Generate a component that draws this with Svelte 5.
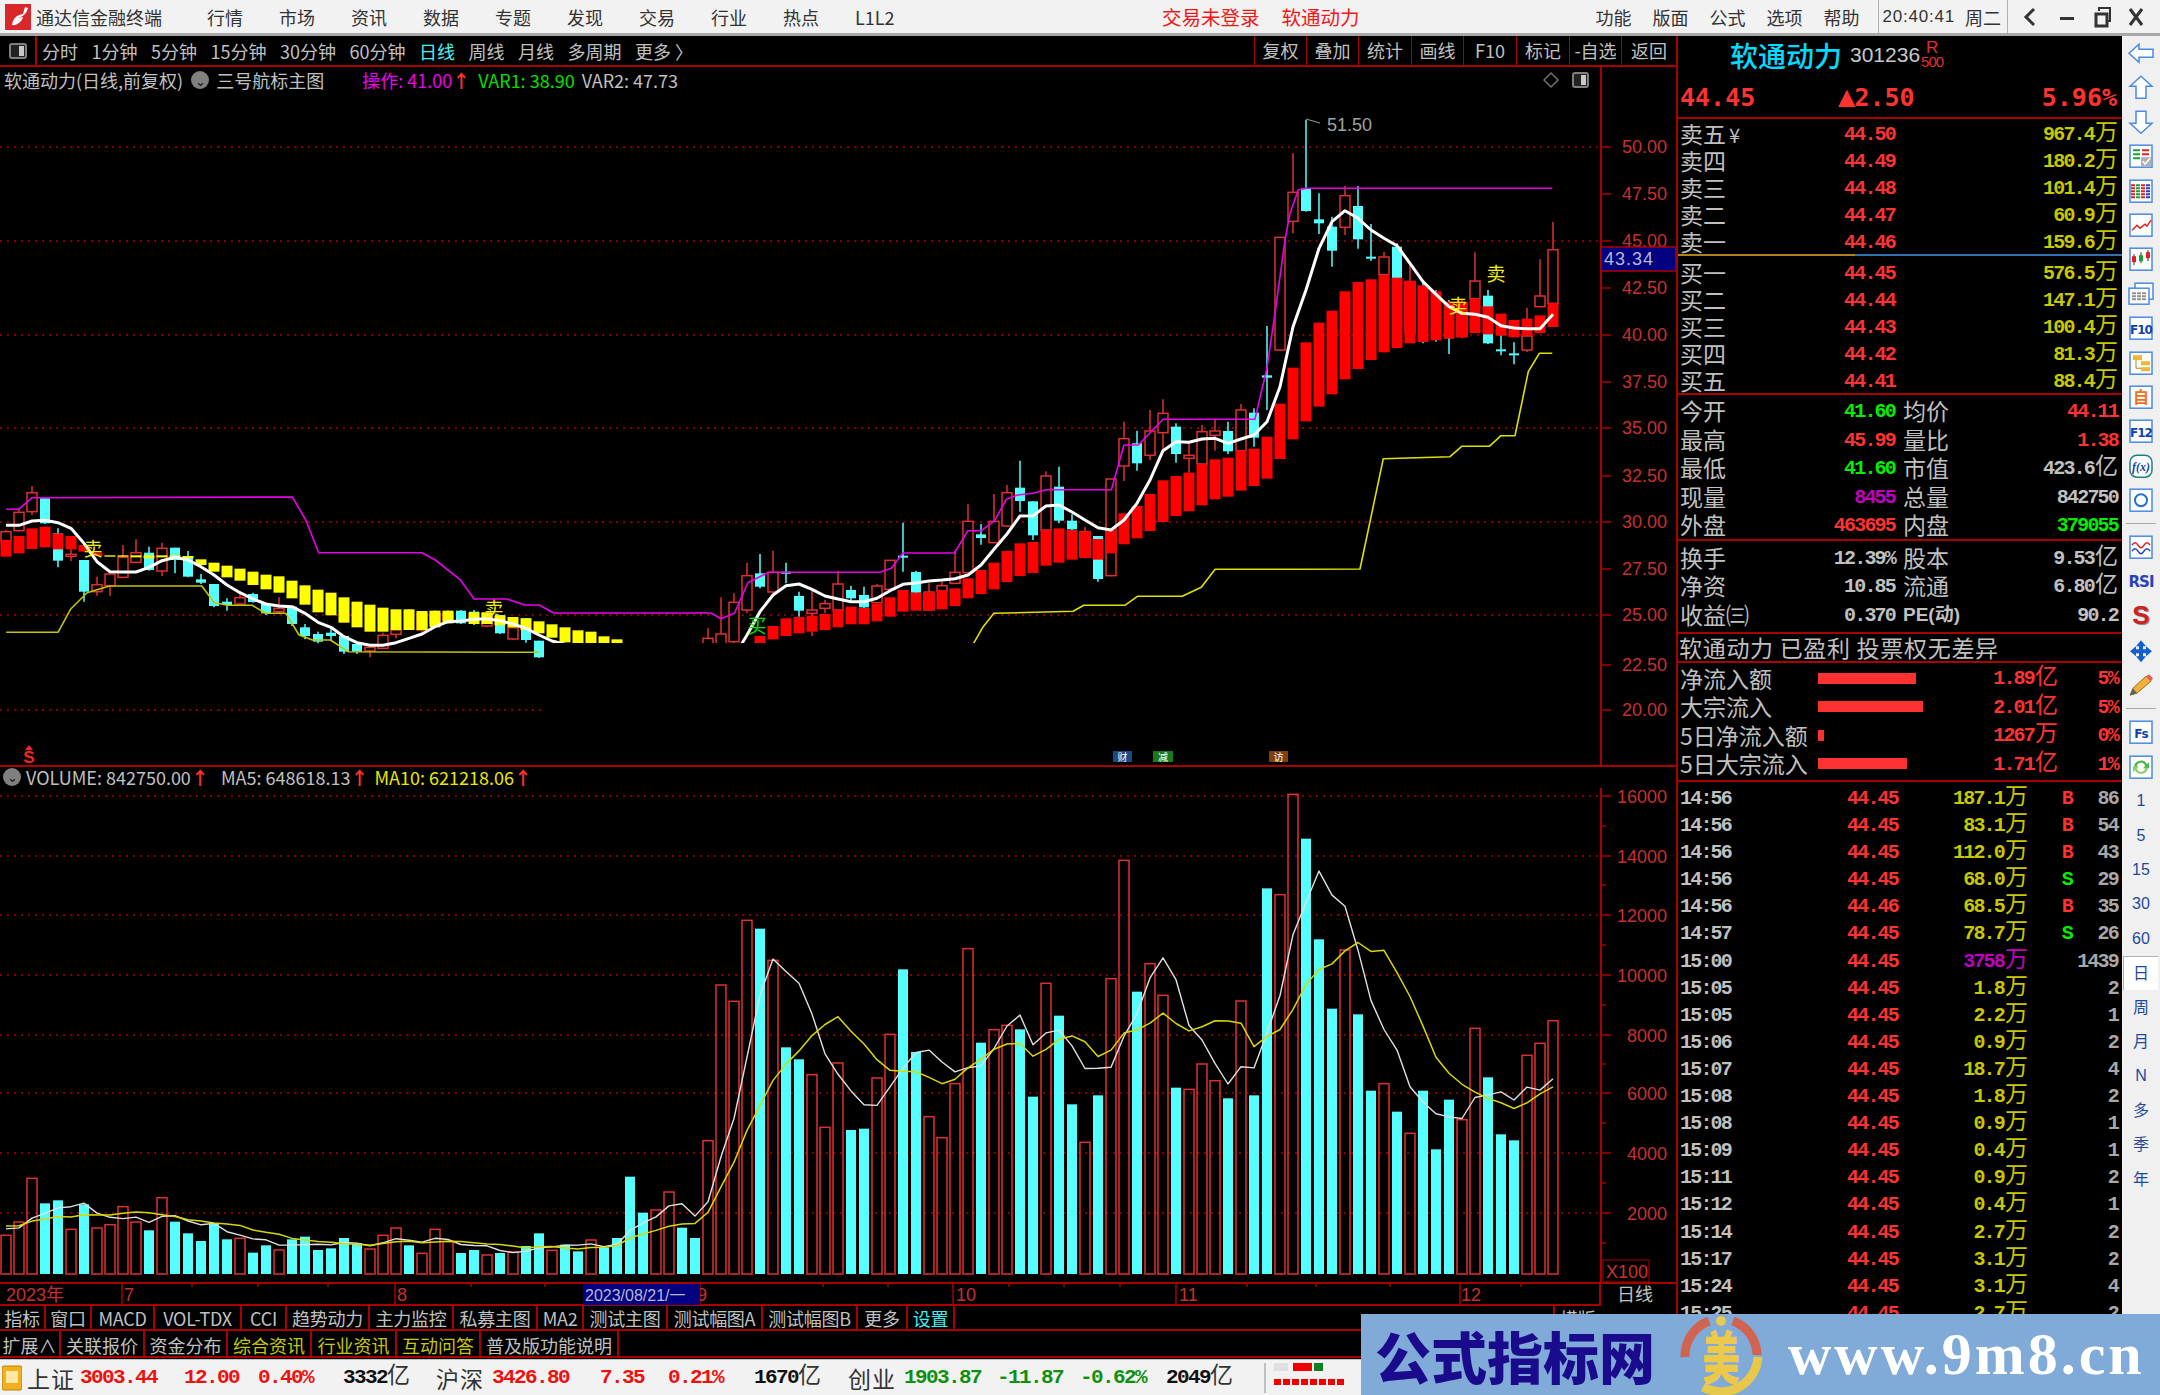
<script>
  const menus = ['行情', '市场', '资讯', '数据', '专题', '发现', '交易', '行业', '热点', 'L1L2'];
  const sysMenus = ['功能', '版面', '公式', '选项', '帮助'];
  const periods = ['分时', '1分钟', '5分钟', '15分钟', '30分钟', '60分钟', '日线', '周线', '月线', '多周期', '更多 〉'];
  const tools = ['复权', '叠加', '统计', '画线', 'F10', '标记', '-自选', '返回'];
  const tabs1 = ['指标', '窗口', 'MACD', 'VOL-TDX', 'CCI', '趋势动力', '主力监控', '私募主图', 'MA2', '测试主图', '测试幅图A', '测试幅图B', '更多', '设置'];
  const tabs2 = ['扩展∧', '关联报价', '资金分布', '综合资讯', '行业资讯', '互动问答', '普及版功能说明'];

  const sells = [
    ['卖五', '44.50', '967.4'], ['卖四', '44.49', '180.2'], ['卖三', '44.48', '101.4'],
    ['卖二', '44.47', '60.9'], ['卖一', '44.46', '159.6']
  ];
  const buys = [
    ['买一', '44.45', '576.5'], ['买二', '44.44', '147.1'], ['买三', '44.43', '100.4'],
    ['买四', '44.42', '81.3'], ['买五', '44.41', '88.4']
  ];
  const flows = [
    ['净流入额', 98, '1.89', '亿', '5%'],
    ['大宗流入', 105, '2.01', '亿', '5%'],
    ['5日净流入额', 6, '1267', '万', '0%'],
    ['5日大宗流入', 89, '1.71', '亿', '1%']
  ];
  const ticks = [
    ['14:56', '44.45', '187.1', 'B', '86'], ['14:56', '44.45', '83.1', 'B', '54'],
    ['14:56', '44.45', '112.0', 'B', '43'], ['14:56', '44.45', '68.0', 'S', '29'],
    ['14:56', '44.46', '68.5', 'B', '35'], ['14:57', '44.45', '78.7', 'S', '26'],
    ['15:00', '44.45', '3758', '', '1439'], ['15:05', '44.45', '1.8', '', '2'],
    ['15:05', '44.45', '2.2', '', '1'], ['15:06', '44.45', '0.9', '', '2'],
    ['15:07', '44.45', '18.7', '', '4'], ['15:08', '44.45', '1.8', '', '2'],
    ['15:08', '44.45', '0.9', '', '1'], ['15:09', '44.45', '0.4', '', '1'],
    ['15:11', '44.45', '0.9', '', '2'], ['15:12', '44.45', '0.4', '', '1'],
    ['15:14', '44.45', '2.7', '', '2'], ['15:17', '44.45', '3.1', '', '2'],
    ['15:24', '44.45', '3.1', '', '4'], ['15:25', '44.45', '2.7', '', '2']
  ];

  // candles sit 13px apart, read off the crops (y values are crop units: base + z / 3)
  const cx = (i) => 6 + 13 * i;
  const shift = (base, rows) => rows.map((r) => r.map((z) => base + z / 3));
  const pts = (sx, x0, y0, rows) =>
    rows.map(([x, y]) => `${(x0 + x / sx).toFixed(1)},${(y0 + y / 3).toFixed(1)}`).join(' ');

  const kinds =
    'rrrccrcrrrrcrccccc' + 'rc' +
    'crccccccrrrcrrrccrcr' +
    'ccrccrccccrrccrrrrcr' +
    'ccrrrccrrccrrrrcrrcc' +
    'rccrcrrcrrcrrrcrccrr' +
    'cccrccrcrcccrrcccrrr';

  const candles = [
    ...shift(450, [
      [245,272,240,275],[187,242,175,245],[128,185,108,195],[145,220,145,222],[250,332,235,352],
      [313,318,298,333],[330,425,330,455],[404,425,380,437],[372,407,370,437],[322,382,285,385],
      [308,337,268,340],[308,360,290,362],[295,363,278,378],[293,330,293,370],[318,380,303,382],
      [388,398,372,402],[402,468,402,472],[455,465,445,482],[443,462,430,465],[432,456,428,458],
      [462,490,462,495],[475,485,442,490],[470,522,470,528],[532,558,522,568],[552,575,545,580],
      [548,558,536,572],[558,605,558,612],[582,605,580,612],[592,603,590,622],[556,595,548,597],
      [540,553,508,565],[490,535,478,540],[490,540,484,545],[490,520,480,530],[490,510,480,520],
      [482,520,480,522],[485,520,480,525],[490,528,487,532],[495,550,495,552],[533,567,533,569],
      [505,570,505,578],[572,622,572,624]
    ]),
    ...Array(12).fill(null),
    ...shift(380, [
      [775,800,745,820],[762,800,652,820],[667,785,640,790],[587,690,548,700],[580,620,522,625],
      [577,636,512,640],[575,578,548,610],[648,692,635,710],[690,700,632,768],[671,685,660,700],
      [612,690,572,692],[630,655,617,662],[645,682,620,684],[618,668,612,670],[541,628,541,630],
      [527,533,428,575],[576,638,572,640],[636,690,610,692],[617,634,605,640],[577,610,512,612],
      [424,578,373,580],[463,474,432,494],[424,488,342,490],[338,438,315,440],[323,363,242,395],
      [364,466,364,480],[288,450,274,452],[320,422,260,430],[422,448,403,450],[455,530,440,535],
      [468,597,468,605],[297,587,297,589],[176,258,125,303],[190,250,152,272],[153,226,90,240],
      [100,158,58,210],[140,222,130,248],[226,235,190,278],[155,252,135,254],[153,166,120,212],
      [153,214,125,222],[90,212,72,214]
    ]),
    ...shift(100, [
      [938,1013,925,1040],[826,833,678,930],[412,750,412,752],[277,364,160,400],[265,333,60,335],
      [358,370,280,402],[380,452,350,500],[287,382,258,405],[318,418,258,446],[470,476,372,483],
      [471,524,456,526],[440,535,430,537],[545,700,490,720],[560,720,548,730],[580,720,570,725],
      [610,715,600,762],[610,710,600,715],[543,596,457,598],[587,730,570,732],[748,752,705,766],
      [760,765,727,793],[708,750,623,756],[588,620,478,622],[449,610,366,612]
    ])
  ];

  const band = [
    ...shift(450, [
      [270,320],[258,310],[235,297],[230,292],[250,298],[258,298],[285,305],[308,318],[316,320],[316,320],
      [316,322],[316,325],[316,322],[316,324],[318,325],[328,345],[338,365],[347,382],[356,392],[365,405],
      [374,418],[379,428],[392,445],[406,464],[419,487],[428,496],[442,518],[455,532],[464,545],[473,545],
      [478,540],[478,540],[483,540],[482,532],[482,520],[0,0],[487,522],[487,522],[497,526],[501,532],
      [505,540],[514,550],[523,563],[532,577],[541,580],[545,580],[559,580],[568,580]
    ]),
    ...Array(10).fill([0, 0]),
    ...shift(380, [
      [768,790],[738,778],[715,768],[711,760],[707,755],[702,750],[689,742],[680,733],[684,733],[671,724],
      [652,710],[630,695],[638,692],[638,692],[630,688],[625,678],[595,655],[570,642],[548,628],[513,606],
      [490,588],[486,579],[450,557],[445,548],[450,539],[454,534],[477,539],[450,520],[400,493],[378,475],
      [342,453],[301,426],[288,408],[278,394],[252,376],[238,358],[233,350],[211,332]
    ]),
    ...shift(100, [
      [1046,1158],[1010,1136],[911,1077],[803,1018],[727,964],[668,920],[632,883],[574,838],[546,807],[538,780],
      [525,757],[533,744],[542,730],[556,726],[574,721],[605,716],[605,712],[596,699],[619,703],[641,707],
      [660,712],[656,707],[646,699],[610,681]
    ])
  ];

  const whiteY = [
    ...[226,226,213,211,218,235,280,335,365,366,366,352,332,322,330,350,375,405,428,447,462,468,470,490,517,
      532,560,578,586,586,578,565,552,530,515,513,508,506,512,522,535,555,573,583].map((z) => [0, 450 + z / 3]),
    ...Array(12).fill(null),
    ...[830,765,695,645,617,612,628,648,657,665,665,655,632,613,609,603,600,596,585,555,508,462,408,407,378,375,
      396,420,443,450,420,370,300,212,185,187,177,175,190,177].map((z) => [0, 380 + z / 3]),
    ...[1005,965,860,680,570,445,365,332,355,390,415,437,490,545,583,620,640,643,652,677,684,686,686,643].map((z) => [0, 100 + z / 3])
  ];
  const whiteLine = whiteY
    .map((p, i) => (p ? `${cx(i)},${p[1].toFixed(1)}` : ''))
    .filter(Boolean)
    .join(' ');

  const magentaLine = [
    pts(2.24, 0, 450, [[14,178],[42,178],[72,143],[655,141],[685,210],[714,308],[945,308],[975,330],[1030,388],[1062,447],[1135,447],[1175,465],[1208,465],[1240,489],[1568,489]]),
    pts(2.613, 700, 380, [[0,698],[30,700],[55,716],[90,700],[125,608],[180,577],[470,577],[500,565],[530,519],[665,519],[700,452],[735,452],[770,422],[800,358],[830,345],[870,340],[905,329],[1075,329],[1108,195],[1145,195],[1210,118],[1450,118]]),
    pts(3, 1200, 100, [[200,808],[225,640],[255,420],[270,340],[295,270],[318,265],[1057,265]])
  ].join(' ');

  const oliveLine = [
    pts(2.24, 0, 450, [[14,547],[130,547],[158,478],[195,428],[245,408],[452,408],[480,458],[510,466],[565,466],[595,490],[640,490],[670,555],[700,570],[740,570],[780,605],[1208,607]]),
  ].join(' ');
  const oliveLine2 = [
    pts(2.613, 700, 380, [[690,860],[715,790],[740,740],[768,700],[975,694],[1003,676],[1110,676],[1143,649],[1260,649],[1310,622],[1346,568],[1568,568]]),
    pts(3, 1200, 100, [[480,1407],[550,1076],[750,1070],[785,1039],[868,1039],[903,1007],[945,1007],[985,815],[1018,760],[1057,760]])
  ].join(' ');

  const priceAxis = [
    ['50.00', 146], ['47.50', 193], ['45.00', 240], ['42.50', 287], ['40.00', 334], ['37.50', 381], ['35.00', 427],
    ['32.50', 475], ['30.00', 521], ['27.50', 568], ['25.00', 614], ['22.50', 664], ['20.00', 709]
  ];
  const priceDots = [146, 240, 334, 427, 521, 614, 709];

  // volume bar tops, y = 770 + z / 3
  const volTops = [
    1396,1356,1225,1300,1291,1378,1303,1374,1364,1310,1356,1381,1283,1355,1390,1413,1360,1408,1405,1448,
    1426,1440,1408,1400,1440,1435,1404,1420,1437,1396,1374,1426,1450,1378,1415,1449,1440,1455,1449,1446,
    1428,1390,1441,1424,1444,1410,1432,1404,1220,1328,1320,1266,1373,1404,1112,645,694,451,476,571,
    832,868,914,1072,879,1080,1076,924,793,598,846,1040,1103,941,536,818,779,766,778,980,
    640,737,1003,1117,976,626,271,665,581,676,953,958,882,932,985,693,976,355,374,73,
    206,508,716,540,733,962,941,1025,1090,962,1138,989,1049,775,922,1093,1111,856,820,752
  ];
  const volY = (z) => 770 + z / 3;
  const volBase = 1274;
  const volumes = volTops.map((z, i) => ({ x: cx(i), y: volY(z), kind: kinds[i], h: 1510 - z }));

  function movingAvg(n, seed) {
    const hs = [...Array(n - 1).fill(seed), ...volumes.map((v) => v.h)];
    return volumes
      .map((v, i) => {
        const part = hs.slice(i, i + n);
        const avg = part.reduce((a, b) => a + b, 0) / n;
        return `${v.x},${volY(1510 - avg).toFixed(1)}`;
      })
      .join(' ');
  }
  const ma5 = movingAvg(5, 138);
  const ma10 = movingAvg(10, 145);

  const volAxis = [
    ['16000', 796], ['14000', 856], ['12000', 915], ['10000', 975], ['8000', 1035], ['6000', 1093], ['4000', 1153], ['2000', 1213]
  ];
  const volMinor = [826, 885, 945, 1005, 1064, 1123, 1183, 1243];

  const months = [['2023年', 6, 0], ['7', 124, 122], ['8', 397, 395], ['9', 697, 700], ['10', 956, 953], ['11', 1179, 1176], ['12', 1461, 1460]];
  const dateTicks = [192, 258, 328, 471, 545, 823, 888, 1009, 1064, 1120, 1247, 1316, 1390, 1521];
  const textIcons = ['1', '5', '15', '30', '60', '日', '周', '月', 'N', '多', '季', '年'];
</script>

<div class="app">
  <header class="titlebar">
    <svg class="logo" viewBox="0 0 26 26">
      <rect width="26" height="26" fill="#d8282c" />
      <path d="M7 21 C8 14 12 11 18 10 L20 3 L23 4 C21 12 15 13 13 14 L18 13 C17 18 11 22 7 21Z" fill="#fff" />
    </svg>
    <span class="appname">通达信金融终端</span>
    <nav class="menus">
      {#each menus as m}<span>{m}</span>{/each}
    </nav>
    <span class="notice">交易未登录</span>
    <span class="notice stock-notice">软通动力</span>
    <nav class="sysmenus">
      {#each sysMenus as m}<span>{m}</span>{/each}
    </nav>
    <div class="clock">
      <span class="time">20:40:41</span>
      <span>周二</span>
    </div>
    <div class="winbtns">
      <svg viewBox="0 0 130 24">
        <path d="M20 4 L12 12 L20 20" fill="none" stroke="#333" stroke-width="3" />
        <rect x="46" y="12" width="14" height="3" fill="#333" />
        <rect x="82" y="9" width="11" height="12" fill="none" stroke="#333" stroke-width="3" />
        <path d="M85 6 V3 H96 V16 H93" fill="none" stroke="#333" stroke-width="2" />
        <path d="M116 4 L128 20 M128 4 L116 20" stroke="#333" stroke-width="3" />
      </svg>
    </div>
  </header>

  <div class="workspace">
    <section class="left">
      <div class="toolbar">
        <div class="panel-toggle">
          <svg viewBox="0 0 20 20" width="20" height="20">
            <rect x="2" y="3" width="16" height="14" rx="2" fill="#222" stroke="#808080" stroke-width="2" />
            <rect x="11" y="5" width="5" height="10" fill="#c8c8c8" />
          </svg>
        </div>
        <div class="periods">
          {#each periods as p}<span class:on={p === '日线'}>{p}</span>{/each}
        </div>
        <div class="tools">
          {#each tools as t}<span>{t}</span>{/each}
        </div>
      </div>

      <div class="legend">
        <span class="gray">软通动力(日线,前复权)</span>
        <span class="dot">⌄</span>
        <span class="gray">三号航标主图</span>
        <span class="magenta op">操作: 41.00<i>↑</i></span>
        <span class="green var1">VAR1: 38.90</span>
        <span class="gray var2">VAR2: 47.73</span>
        <span class="legend-icons">
          <svg viewBox="0 0 50 20" width="50" height="20">
            <path d="M8 3 L15 10 L8 17 L1 10Z" fill="none" stroke="#707070" stroke-width="1.5" />
            <rect x="30" y="3" width="15" height="14" rx="2" fill="#222" stroke="#808080" stroke-width="2" />
            <rect x="38" y="5" width="5" height="10" fill="#c8c8c8" />
          </svg>
        </span>
      </div>

      <svg class="pane main-pane" viewBox="0 95 1676 670">
        {#each priceDots as y}
          <line x1="0" x2="1600" y1={y + 1} y2={y + 1} class="dots" />
        {/each}

        {#each candles as c, i}
          {#if c}
            <g class={kinds[i] === 'r' ? 'up' : 'down'}>
              <line x1={cx(i)} x2={cx(i)} y1={c[2]} y2={c[3]} />
              <rect x={cx(i) - 5} y={c[0]} width="10" height={Math.max(c[1] - c[0], 2)} />
            </g>
          {/if}
        {/each}

        {#each band as b, i}
          {#if b[1] > b[0]}
            <rect x={cx(i) - 5.5} y={b[0]} width="11" height={b[1] - b[0]} fill={i < 8 || i > 47 ? '#ff0000' : '#ffff00'} />
          {/if}
        {/each}

        <polyline points={magentaLine} class="line-magenta" />
        <polyline points={oliveLine} class="line-olive" />
        <polyline points={oliveLine2} class="line-yellow" />
        <polyline points={whiteLine} class="line-white" />

        <!-- that part of the lower chart is blacked out in the screenshot -->
        <rect x="545" y="643" width="1055" height="122" fill="#000" />

        <text x="93" y="556" class="mark sell">卖</text>
        <text x="494" y="616" class="mark sell">卖</text>
        <text x="1458" y="313" class="mark sell">卖</text>
        <text x="1496" y="281" class="mark sell">卖</text>
        <text x="757" y="633" class="mark buy">买</text>

        <path d="M1306 119 L1320 123" stroke="#a0a0a0" fill="none" />
        <text x="1327" y="131" class="peak">51.50</text>

        <path d="M29 745 L33 750 H25Z" fill="#ff2020" />
        <text x="29" y="763" class="dollar">S</text>
        <g class="events">
          <rect x="1113" y="751" width="19" height="11" fill="#1a4a80" />
          <text x="1122.5" y="761">财</text>
          <rect x="1153" y="751" width="20" height="11" fill="#1a7a1a" />
          <text x="1163" y="761">减</text>
          <rect x="1269" y="751" width="19" height="11" fill="#804010" />
          <text x="1278.5" y="761">访</text>
        </g>

        <line x1="1601" x2="1601" y1="95" y2="765" class="axis-line" />
        {#each priceAxis as [label, y]}
          <line x1="1601" x2="1611" y1={y + 1} y2={y + 1} class="axis-tick" />
          <text x="1622" y={y + 7} class="axis-text">{label}</text>
        {/each}
        <rect x="1601" y="247" width="75" height="24" fill="#000080" stroke="#b00000" stroke-width="1.5" />
        <text x="1604" y="265" class="last-price">43.34</text>
      </svg>

      <div class="legend vol-legend">
        <span class="dot">⌄</span>
        <span class="gray">VOLUME: 842750.00<i>↑</i></span>
        <span class="gray ma5">MA5: 648618.13<i>↑</i></span>
        <span class="yellow ma10">MA10: 621218.06<i>↑</i></span>
      </div>

      <svg class="pane vol-pane" viewBox="0 788 1676 494">
        {#each volAxis as [, y]}
          <line x1="0" x2="1600" y1={y} y2={y} class="dots" />
        {/each}

        {#each volumes as v}
          <rect
            x={v.x - 5}
            y={v.y}
            width="10"
            height={volBase - v.y}
            class={v.kind === 'r' ? 'vol-up' : 'vol-down'}
          />
        {/each}

        <polyline points={ma5} class="ma-white" />
        <polyline points={ma10} class="ma-yellow" />

        <line x1="1601" x2="1601" y1="788" y2="1282" class="axis-line" />
        {#each volAxis as [label, y]}
          <line x1="1601" x2="1611" y1={y} y2={y} class="axis-tick" />
          <text x={label.length > 4 ? 1617 : 1627} y={y + 7} class="axis-text">{label}</text>
        {/each}
        {#each volMinor as y}
          <line x1="1601" x2="1606" y1={y} y2={y} class="axis-tick" />
        {/each}
        <rect x="1603" y="1260" width="46" height="22" fill="none" stroke="#a80000" />
        <text x="1606" y="1278" class="axis-text">X100</text>
      </svg>

      <svg class="pane date-row" viewBox="0 1282 1676 24">
        <line x1="0" x2="1676" y1="1283" y2="1283" class="axis-line" />
        <line x1="0" x2="1600" y1="1305" y2="1305" class="axis-line" />
        {#each dateTicks as x}
          <line x1={x} x2={x} y1="1283" y2="1287" class="axis-tick" />
        {/each}
        {#each months as [label, tx, lx]}
          {#if lx}<line x1={lx} x2={lx} y1="1283" y2="1306" class="axis-tick" />{/if}
          <text x={tx} y="1301" class="axis-text">{label}</text>
        {/each}
        <rect x="583" y="1284" width="117" height="21" fill="#000080" />
        <text x="585" y="1301" class="cursor-date">2023/08/21/一</text>
        <line x1="1600" x2="1600" y1="1283" y2="1306" class="axis-line" />
        <text x="1635" y="1301" class="period-name">日线</text>
      </svg>

      <div class="tabs tabs-a">
        {#each tabs1 as t}<span class:cyan={t === '设置'}>{t}</span>{/each}
        <span class="blank"></span>
        <span class="tail">横版</span>
        <span class="tail">+</span>
      </div>
      <div class="tabs tabs-b">
        {#each tabs2 as t}
          <span class:olive={t === '综合资讯' || t === '行业资讯' || t === '互动问答'}>{t}</span>
        {/each}
      </div>
    </section>

    <aside class="quote">
      <div class="q-head">
        <div class="q-name">
          <span class="name">软通动力</span>
          <span class="code">301236</span>
          <span class="tag"><b>R</b><small>500</small></span>
        </div>
        <div class="q-price">
          <span>44.45</span>
          <span><i>▲</i>2.50</span>
          <span>5.96%</span>
        </div>
      </div>

      <div class="book sells">
        {#each sells as [label, price, vol], i}
          <div class="row">
            <span class="cjk">{label}{#if i === 0}<em>¥</em>{/if}</span>
            <span class="num red">{price}</span>
            <span class="num olive-t">{vol}<i>万</i></span>
          </div>
        {/each}
      </div>
      <div class="book buys">
        {#each buys as [label, price, vol]}
          <div class="row">
            <span class="cjk">{label}</span>
            <span class="num red">{price}</span>
            <span class="num olive-t">{vol}<i>万</i></span>
          </div>
        {/each}
      </div>

      <div class="stats stats-a">
        <span class="cjk">今开</span><span class="num green-t">41.60</span><span class="cjk">均价</span><span class="num red">44.11</span>
        <span class="cjk">最高</span><span class="num red">45.99</span><span class="cjk">量比</span><span class="num red">1.38</span>
        <span class="cjk">最低</span><span class="num green-t">41.60</span><span class="cjk">市值</span><span class="num">423.6<i>亿</i></span>
        <span class="cjk">现量</span><span class="num purple">8455</span><span class="cjk">总量</span><span class="num">842750</span>
        <span class="cjk">外盘</span><span class="num red">463695</span><span class="cjk">内盘</span><span class="num green-t">379055</span>
      </div>
      <div class="stats stats-b">
        <span class="cjk">换手</span><span class="num">12.39%</span><span class="cjk">股本</span><span class="num">9.53<i>亿</i></span>
        <span class="cjk">净资</span><span class="num">10.85</span><span class="cjk">流通</span><span class="num">6.80<i>亿</i></span>
        <span class="cjk">收益㈢</span><span class="num">0.370</span><span class="pe">PE(动)</span><span class="num">90.2</span>
      </div>

      <div class="q-title">软通动力 已盈利 投票权无差异</div>

      <div class="flows">
        {#each flows as [label, w, val, unit, pct]}
          <div class="flow">
            <span class="cjk">{label}</span>
            <span class="bar-wrap"><span class="bar" style="width:{w}px"></span></span>
            <span class="num red">{val}<i>{unit}</i></span>
            <span class="num red">{pct}</span>
          </div>
        {/each}
      </div>

      <div class="ticks">
        {#each ticks as [time, price, vol, side, count]}
          <div class="tick">
            <span class="num time-t">{time}</span>
            <span class="num red">{price}</span>
            <span class="num" class:purple={vol === '3758'} class:olive-t={vol !== '3758'}>{vol}<i>万</i></span>
            <span class="num" class:red={side === 'B'} class:green-t={side === 'S'}>{side}</span>
            <span class="num count">{count}</span>
          </div>
        {/each}
      </div>
    </aside>

    <aside class="strip">
      <svg viewBox="0 0 28 24"><polygon points="2,12 12,3 12,8 26,8 26,16 12,16 12,21" class="arrow" /></svg>
      <svg viewBox="0 0 28 24"><polygon points="14,1 25,11 19,11 19,23 9,23 9,11 3,11" class="arrow" /></svg>
      <svg viewBox="0 0 28 24"><polygon points="14,23 25,13 19,13 19,1 9,1 9,13 3,13" class="arrow" /></svg>
      <svg viewBox="0 0 28 24">
        <rect x="3" y="1" width="22" height="22" class="frame" />
        <path d="M6 6h7M6 10h7M6 14h7" stroke="#18a038" stroke-width="2" />
        <path d="M15 6h7M15 10h7" stroke="#e02020" stroke-width="2" />
        <rect x="14" y="13" width="10" height="9" fill="#b0b0b0" />
        <path d="M16 17 L18 20 L23 14" fill="none" stroke="#fff" stroke-width="1.5" />
      </svg>
      <svg viewBox="0 0 28 24">
        <rect x="3" y="1" width="22" height="22" class="frame" />
        <path d="M6 5v15" stroke="#e02020" stroke-width="4" stroke-dasharray="2 1" />
        <path d="M11 5v15" stroke="#18a038" stroke-width="4" stroke-dasharray="2 1" />
        <path d="M16 5v15" stroke="#e02020" stroke-width="4" stroke-dasharray="2 1" />
        <path d="M21 5v15" stroke="#2040d0" stroke-width="4" stroke-dasharray="2 1" />
      </svg>
      <svg viewBox="0 0 28 24">
        <rect x="3" y="1" width="22" height="22" class="frame" />
        <path d="M5 17 L10 12 L13 15 L18 11 L20 13 L24 7" fill="none" stroke="#e02020" stroke-width="1.5" />
      </svg>
      <svg viewBox="0 0 28 24">
        <rect x="3" y="1" width="22" height="22" class="frame" />
        <path d="M7 7v11M14 5v11M21 3v11" stroke="#303030" />
        <rect x="5" y="9" width="4" height="6" fill="#e02020" />
        <rect x="12" y="8" width="4" height="6" fill="#18a038" />
        <rect x="19" y="5" width="4" height="6" fill="#e02020" />
      </svg>
      <svg viewBox="0 0 28 24">
        <rect x="8" y="1" width="18" height="16" class="frame" />
        <rect x="2" y="6" width="20" height="16" class="frame" />
        <path d="M5 11h14M5 14h14M5 17h14" stroke="#909090" stroke-width="2" stroke-dasharray="4 1" />
      </svg>
      <svg viewBox="0 0 28 24">
        <rect x="3" y="1" width="22" height="22" class="frame" />
        <text x="14" y="18" class="icon-f">F10</text>
      </svg>
      <svg viewBox="0 0 28 24">
        <rect x="3" y="1" width="22" height="22" class="frame" />
        <path d="M9 9v8h5" fill="none" stroke="#b08020" />
        <rect x="6" y="4" width="9" height="5" fill="#f0b830" />
        <rect x="14" y="10" width="9" height="4" fill="#f0b830" />
        <rect x="14" y="16" width="9" height="4" fill="#f0b830" />
      </svg>
      <svg viewBox="0 0 28 24">
        <rect x="3" y="1" width="22" height="22" class="frame" />
        <text x="14" y="18" class="icon-zi">自</text>
      </svg>
      <svg viewBox="0 0 28 24">
        <rect x="3" y="1" width="22" height="22" class="frame" />
        <text x="14" y="18" class="icon-f">F12</text>
      </svg>
      <svg viewBox="0 0 28 24">
        <rect x="3" y="1" width="22" height="22" rx="7" fill="#fff" stroke="#208080" stroke-width="1.5" />
        <text x="14" y="17" class="icon-fx">f(x)</text>
      </svg>
      <svg viewBox="0 0 28 24">
        <rect x="3" y="1" width="22" height="22" class="frame" />
        <circle cx="14" cy="12" r="6" fill="none" stroke="#2070d0" stroke-width="2" />
      </svg>

      <div class="sep"></div>

      <svg viewBox="0 0 28 24">
        <rect x="3" y="1" width="22" height="22" class="frame" />
        <path d="M5 10 Q8 5 11 10 T17 10 T23 10" fill="none" stroke="#e02020" stroke-width="1.5" />
        <path d="M5 16 Q8 11 11 16 T17 16 T23 16" fill="none" stroke="#2040d0" stroke-width="1.5" />
      </svg>
      <span class="rsi">RSI</span>
      <span class="dollar-icon">S</span>
      <svg viewBox="0 0 28 24">
        <path d="M14 1 L19 7 H16 V10 H19 V7 L25 12 L19 17 V14 H16 V17 H19 L14 23 L9 17 H12 V14 H9 V17 L3 12 L9 7 V10 H12 V7 H9Z" fill="#1060d0" />
      </svg>
      <svg viewBox="0 0 28 24">
        <path d="M3 22 L6 15 L19 3 L24 8 L10 20Z" fill="#f0b040" stroke="#a07020" />
        <path d="M19 3 L24 8 L26 5 L22 1Z" fill="#e06060" />
        <path d="M3 22 L6 15 L10 20Z" fill="#606060" />
      </svg>

      <div class="sep"></div>

      <svg viewBox="0 0 28 24">
        <rect x="3" y="1" width="22" height="22" class="frame" />
        <text x="14" y="18" class="icon-f">Fs</text>
      </svg>
      <svg viewBox="0 0 28 24">
        <rect x="3" y="1" width="22" height="22" class="frame" />
        <path d="M7 11 A7 7 0 0 1 20 9 L22 7 V13 H16 L18 11 A4 4 0 0 0 10 12Z" fill="#50b848" />
        <path d="M21 13 A7 7 0 0 1 8 15 L6 17 V11 H12 L10 13 A4 4 0 0 0 18 12Z" fill="#88d070" />
      </svg>

      {#each textIcons as t}
        <span class="txt-btn" class:current={t === '日'}>{t}</span>
      {/each}
    </aside>
  </div>

  <footer class="status">
    <svg viewBox="0 0 20 26" width="20" height="26">
      <rect x="0" y="1" width="20" height="24" rx="2" fill="#f0b020" stroke="#c08000" />
      <rect x="4" y="6" width="12" height="12" fill="#ffe9a0" />
    </svg>
    <span class="s-name">上证</span>
    <span class="s-red">3003.44</span>
    <span class="s-red">12.00</span>
    <span class="s-red">0.40%</span>
    <span class="s-amt">3332<i>亿</i></span>
    <span class="s-name">沪深</span>
    <span class="s-red">3426.80</span>
    <span class="s-red">7.35</span>
    <span class="s-red">0.21%</span>
    <span class="s-amt">1670<i>亿</i></span>
    <span class="s-name">创业</span>
    <span class="s-green">1903.87</span>
    <span class="s-green">-11.87</span>
    <span class="s-green">-0.62%</span>
    <span class="s-amt">2049<i>亿</i></span>
    <svg class="minis" viewBox="0 0 90 30" width="90" height="30">
      <rect x="0" y="0" width="14" height="8" fill="#e0e0e0" />
      <rect x="19" y="0" width="19" height="8" fill="#f00000" />
      <rect x="40" y="0" width="9" height="8" fill="#108020" />
      <path d="M0 19 H70" stroke="#f00000" stroke-width="6" stroke-dasharray="7 2" />
    </svg>
  </footer>

  <div class="watermark">
    <span class="wm-title">公式指标网</span>
    <svg class="wm-logo" viewBox="0 0 84 80" width="84" height="80">
      <path d="M6 42 A37 37 0 0 1 30 6" fill="none" stroke="#d06450" stroke-width="9" />
      <path d="M54 6 A37 37 0 0 1 78 40" fill="none" stroke="#d06450" stroke-width="9" />
      <path d="M79 42 A37 37 0 0 1 24 72" fill="none" stroke="#e8c84a" stroke-width="9" />
      <circle cx="42" cy="6" r="5" fill="#ecc94b" />
      <text transform="translate(42 64) scale(0.85 1.3)" class="wm-glyph">美</text>
    </svg>
    <span class="wm-url">www.9m8.cn</span>
  </div>
</div>

<style>
  :global(body) {
    margin: 0;
    background: #000;
  }

  .app {
    position: relative;
    width: 2160px;
    height: 1395px;
    overflow: hidden;
    display: grid;
    grid-template-rows: 36px 1323px 36px;
    background: #000;
    font-family: "Noto Sans CJK SC", "Liberation Sans", sans-serif;
    color: #c0c0c0;
  }

  i {
    font-style: normal;
  }

  /* title bar */
  .titlebar {
    display: flex;
    align-items: center;
    box-sizing: border-box;
    padding-left: 5px;
    background: #f2f2f2;
    border-bottom: 3px solid #a8a8a8;
    font-size: 18px;
    color: #333;
  }

  .logo {
    width: 26px;
    height: 26px;
    flex: none;
  }

  .appname {
    margin-left: 5px;
    width: 171px;
  }

  .menus {
    display: flex;
    gap: 36px;
    width: 955px;
    white-space: nowrap;
  }

  .notice {
    color: #f01818;
    font-size: 19.5px;
  }

  .stock-notice {
    margin-left: 22px;
  }

  .sysmenus {
    display: flex;
    gap: 21px;
    margin-left: 236px;
  }

  .clock {
    display: flex;
    gap: 10px;
    align-self: stretch;
    align-items: center;
    margin-left: 18px;
    padding: 0 6px 0 4px;
    border-left: 1px solid #b0b0b0;
    border-right: 1px solid #b0b0b0;
  }

  .time {
    font-family: "Liberation Sans", sans-serif;
    font-size: 17px;
    letter-spacing: 0.8px;
  }

  .winbtns {
    margin-left: 5px;
  }

  .winbtns svg {
    display: block;
    width: 132px;
    height: 24px;
  }

  /* main grid */
  .workspace {
    display: grid;
    grid-template-columns: 1676px 446px 38px;
    height: 1323px;
    overflow: hidden;
  }

  .left {
    display: flex;
    flex-direction: column;
    min-width: 0;
  }

  .toolbar {
    display: flex;
    align-items: stretch;
    box-sizing: border-box;
    height: 31px;
    border-bottom: 2px solid #a80000;
    font-size: 18px;
  }

  .panel-toggle {
    display: flex;
    align-items: center;
    justify-content: center;
    width: 35px;
    border-right: 2px solid #a80000;
  }

  .periods {
    display: flex;
    align-items: center;
    gap: 13.5px;
    padding-left: 5px;
    white-space: nowrap;
  }

  .periods .on {
    color: #4cf0f0;
  }

  .tools {
    display: grid;
    grid-template-columns: 52px 52px 53px 52px 53px 53px 52px 55px;
    margin-left: auto;
    text-align: center;
  }

  .tools span {
    box-sizing: border-box;
    border-left: 1px solid #a80000;
    line-height: 28px;
  }

  .legend {
    display: flex;
    align-items: center;
    box-sizing: border-box;
    width: 1602px;
    height: 28px;
    border-right: 2px solid #a80000;
    padding: 0 0 2px 4px;
    font-size: 18px;
    white-space: nowrap;
  }

  .legend i {
    color: #ff3030;
    font-weight: 700;
  }

  .gray {
    color: #c0c0c0;
  }

  .magenta {
    color: #f000f0;
  }

  .green {
    color: #00e000;
  }

  .yellow {
    color: #e8e800;
  }

  .dot {
    display: inline-flex;
    align-items: center;
    justify-content: center;
    width: 18px;
    height: 18px;
    margin: 0 7px 0 8px;
    border-radius: 50%;
    background: #808080;
    color: #111;
    font-size: 13px;
    line-height: 1;
  }

  .op {
    margin-left: 38px;
  }

  .var1 {
    margin-left: 8px;
  }

  .var2 {
    margin-left: 7px;
  }

  .legend-icons {
    margin-left: auto;
    margin-right: 7px;
    display: flex;
  }

  .vol-legend {
    width: 100%;
    height: 23px;
    padding-left: 0;
    border-top: 2px solid #a80000;
    border-right: none;
  }

  .vol-legend .dot {
    margin: 0 5px 0 3px;
  }

  .ma5 {
    margin-left: 12px;
  }

  .ma10 {
    margin-left: 6px;
  }

  .pane {
    display: block;
    width: 1676px;
    flex: none;
  }

  .main-pane {
    height: 670px;
  }

  .vol-pane {
    height: 494px;
  }

  .date-row {
    height: 24px;
    background: #000;
  }

  .dots {
    stroke: #b00000;
    stroke-width: 1.5;
    stroke-dasharray: 2 5;
  }

  .up line,
  .up rect {
    stroke: #e03030;
    stroke-width: 1.5;
  }

  .up rect {
    fill: #000;
  }

  .down line {
    stroke: #55ffff;
    stroke-width: 1.5;
  }

  .down rect {
    fill: #55ffff;
  }

  polyline {
    fill: none;
    stroke-linejoin: round;
  }

  .line-magenta {
    stroke: #e800e8;
    stroke-width: 1.6;
  }

  .line-olive {
    stroke: #c4c400;
    stroke-width: 1.6;
  }

  .line-yellow {
    stroke: #e0e000;
    stroke-width: 1.6;
  }

  .line-white {
    stroke: #fff;
    stroke-width: 3;
  }

  .mark {
    font-size: 19px;
    text-anchor: middle;
  }

  .sell {
    fill: #f0f000;
  }

  .buy {
    fill: #00e000;
  }

  .peak {
    fill: #a0a0a0;
    font: 18px "Liberation Sans", sans-serif;
  }

  .dollar {
    fill: #ff2020;
    font: 700 17px "Liberation Sans", sans-serif;
    text-anchor: middle;
  }

  .events text {
    fill: #fff;
    font-size: 10px;
    text-anchor: middle;
  }

  .axis-line {
    stroke: #a80000;
    stroke-width: 2;
  }

  .axis-tick {
    stroke: #a80000;
    stroke-width: 1.5;
  }

  .axis-text {
    fill: #c83030;
    font: 18px "Liberation Sans", "Noto Sans CJK SC", sans-serif;
  }

  .last-price {
    fill: #b8b8d8;
    font: 18px "Liberation Sans", sans-serif;
    letter-spacing: 1px;
  }

  .cursor-date {
    fill: #b8b8d8;
    font: 16px "Liberation Sans", "Noto Sans CJK SC", sans-serif;
  }

  .period-name {
    fill: #c0c0c0;
    font-size: 18px;
    text-anchor: middle;
  }

  .vol-up {
    fill: none;
    stroke: #e03030;
    stroke-width: 1.5;
  }

  .vol-down {
    fill: #55ffff;
  }

  .ma-white {
    stroke: #e0e0e0;
    stroke-width: 1.4;
  }

  .ma-yellow {
    stroke: #d8d800;
    stroke-width: 1.5;
  }

  /* tab rows */
  .tabs {
    display: grid;
    box-sizing: border-box;
    border-bottom: 2px solid #a80000;
    font-size: 18px;
    white-space: nowrap;
  }

  .tabs span {
    border-right: 2px solid #a80000;
    text-align: center;
    overflow: hidden;
  }

  .tabs-a {
    height: 25px;
    line-height: 25px;
    grid-template-columns: 46px 46px 63px 87px 45px 83px 84px 84px 46px 84px 95px 95px 50px 47px 600px 45px 76px;
    letter-spacing: -0.3px;
  }

  .tabs-a .tail {
    border-right: none;
  }

  .tabs-b {
    height: 27px;
    line-height: 29px;
    grid-template-columns: 61px 84px 83px 84px 85px 84px 138px;
  }

  .tabs .cyan {
    color: #40f0f0;
  }

  .tabs .olive {
    color: #c8c800;
  }

  /* quote panel */
  .quote {
    display: flex;
    flex-direction: column;
    border-left: 2px solid #a80000;
    overflow: hidden;
    box-sizing: border-box;
    width: 446px;
    font-size: 23px;
    line-height: 27px;
  }

  .q-head {
    box-sizing: border-box;
    height: 83px;
    border-bottom: 2px solid #a80000;
  }

  .q-name {
    display: flex;
    align-items: center;
    height: 38px;
    padding-left: 52px;
    white-space: nowrap;
  }

  .name {
    font-size: 28px;
    font-weight: 500;
    color: #00dcff;
  }

  .code {
    margin-left: 8px;
    font: 21px "Liberation Sans", sans-serif;
    color: #c8c8c8;
  }

  .tag {
    display: flex;
    flex-direction: column;
    align-items: center;
    color: #e03030;
    font: 14px/14px "Liberation Sans", sans-serif;
    margin-left: 1px;
  }

  .tag b {
    font-weight: 400;
    font-size: 17px;
    line-height: 14px;
  }

  .tag small {
    font-size: 15px;
    letter-spacing: -1px;
  }

  .q-price {
    display: grid;
    grid-template-columns: 158px 199px 1fr;
    margin-top: 6px;
    padding: 0 5px 0 2px;
    font: 700 25px/36px "DejaVu Sans Mono", monospace;
    color: #ff3232;
  }

  .q-price i {
    font-size: 29px;
    line-height: 0;
    letter-spacing: -1px;
  }

  .q-price span:last-child {
    text-align: right;
  }

  .book {
    box-sizing: border-box;
    padding: 0 4px 0 2px;
  }

  .sells {
    height: 137px;
    padding-top: 1px;
    border-bottom: 2px solid;
    border-image: linear-gradient(to right, #b08020 0 40%, #3070b0 40% 100%) 1;
  }

  .buys {
    height: 139px;
    padding-top: 3px;
    border-bottom: 2px solid #a80000;
  }

  .row {
    display: grid;
    grid-template-columns: 215px 1fr;
    height: 27.1px;
  }

  .row .cjk {
    grid-row: 1;
    grid-column: 1;
  }

  .row .red {
    grid-row: 1;
    grid-column: 1;
    text-align: right;
  }

  .row .olive-t {
    grid-row: 1;
    grid-column: 2;
    text-align: right;
  }

  .cjk em {
    font-style: normal;
    font-size: 20px;
    margin-left: 3px;
  }

  .num {
    padding-top: 1px;
    font: 700 20px/27px "Liberation Mono", monospace;
    letter-spacing: -1.8px;
    color: #c0c0c0;
    white-space: nowrap;
  }

  .num i {
    font: 400 23px/0 "Noto Sans CJK SC", sans-serif;
    letter-spacing: 0;
    margin-left: 1px;
  }

  .red {
    color: #ff3232;
  }

  .olive-t {
    color: #c8c800;
  }

  .green-t {
    color: #00f000;
  }

  .purple {
    color: #c000c0;
  }

  .stats {
    display: grid;
    grid-template-columns: 130px 85px 100px 1fr;
    padding: 0 4px 0 2px;
    box-sizing: border-box;
    border-bottom: 2px solid #a80000;
  }

  .stats > .num {
    text-align: right;
  }

  .stats > .cjk:nth-child(4n + 3),
  .stats .pe {
    padding-left: 8px;
  }

  .stats .pe {
    font: 700 19px/28px "Liberation Sans", "Noto Sans CJK SC", sans-serif;
    white-space: nowrap;
  }

  .stats-a {
    height: 146px;
    padding-top: 2px;
    grid-auto-rows: 28.5px;
  }

  .stats-b {
    height: 93px;
    padding-top: 2.5px;
    grid-auto-rows: 28.7px;
  }

  .q-title {
    box-sizing: border-box;
    height: 29px;
    padding-left: 1px;
    border-bottom: 2px solid #a80000;
    line-height: 27px;
    letter-spacing: 0.7px;
    white-space: nowrap;
  }

  .flows {
    box-sizing: border-box;
    height: 119px;
    padding: 1px 4px 0 2px;
    border-bottom: 2px solid #a80000;
  }

  .flow {
    display: grid;
    grid-template-columns: 138px 176px 64px 1fr;
    height: 28.5px;
    align-items: center;
    white-space: nowrap;
  }

  .flow .num {
    text-align: right;
  }

  .flow .num:nth-child(3) {
    grid-column: 2 / 4;
    grid-row: 1;
  }

  .flow .bar-wrap {
    grid-column: 2;
    grid-row: 1;
  }

  .flow .num:last-child {
    grid-column: 4;
    grid-row: 1;
  }

  .bar {
    display: block;
    height: 11px;
    background: #ff3232;
  }

  .ticks {
    padding: 2px 4px 0 2px;
  }

  .tick {
    display: grid;
    grid-template-columns: 218px 130px 44px 46px;
    height: 27.1px;
    position: relative;
    text-align: right;
  }

  .tick .time-t {
    position: absolute;
    left: 0;
    top: 0;
  }

  .tick .count {
    color: #a8a8a8;
  }

  /* right icon strip */
  .strip {
    display: flex;
    flex-direction: column;
    align-items: center;
    box-sizing: border-box;
    background: #f0f0f0;
    color: #2050a0;
  }

  .strip > svg,
  .strip > span {
    flex: none;
    box-sizing: border-box;
    display: block;
    width: 36px;
    height: 34.4px;
    padding: 5px 4px;
    text-align: center;
  }

  .arrow {
    fill: #fff;
    stroke: #4a8ae8;
    stroke-width: 1.5;
  }

  .frame {
    fill: #fff;
    stroke: #4a8ae8;
    stroke-width: 1.5;
  }

  .icon-f {
    fill: #1040b0;
    font: 700 12px "DejaVu Sans", sans-serif;
    text-anchor: middle;
    letter-spacing: -1px;
  }

  .icon-zi {
    fill: #f07020;
    font-size: 16px;
    font-weight: 700;
    text-anchor: middle;
  }

  .icon-fx {
    fill: #1040b0;
    font: italic 700 12px "Liberation Serif", serif;
    text-anchor: middle;
  }

  .sep {
    flex: none;
    width: 30px;
    height: 11px;
    border-bottom: 1px solid #a8a8a8;
    margin-bottom: 1px;
    transform: translateY(-5px);
  }

  .strip > .rsi {
    font: 700 15px/24px "DejaVu Sans", sans-serif;
    letter-spacing: -1px;
    color: #2a44b8;
  }

  .strip > .dollar-icon {
    font: 700 26px/24px "Liberation Sans", sans-serif;
    color: #d02020;
    text-shadow: 1px 1px 1px #808080;
    padding-top: 4px;
  }

  .strip > .txt-btn {
    font: 16px/24px "Liberation Sans", "Noto Sans CJK SC", sans-serif;
    color: #1c4a9c;
    padding: 5px 0;
  }

  .strip > .current {
    background: #fff;
    border: 1px solid #b0b0b0;
    border-bottom-color: #f0f0f0;
    border-right-color: #f0f0f0;
  }

  /* bottom status */
  .status {
    display: grid;
    grid-template-columns: 25px 53px 104px 74px 85px 93px 56px 108px 68px 86px 94px 56px 93px 83px 86px 98px 1fr;
    align-items: center;
    box-sizing: border-box;
    padding-left: 2px;
    background: #f2f2f2;
    border-top: 1px solid #c0c0c0;
    font: 700 21px "Liberation Mono", monospace;
    white-space: nowrap;
    color: #111;
  }

  .status span {
    letter-spacing: -1.6px;
  }

  .status .s-name {
    font: 400 23px "Noto Sans CJK SC", sans-serif;
    color: #333;
    letter-spacing: 1px;
  }

  .s-red {
    color: #f01010;
  }

  .s-green {
    color: #109010;
  }

  .s-amt i {
    font: 400 23px/0 "Noto Sans CJK SC", sans-serif;
    color: #333;
  }

  .minis {
    border-left: 2px solid #c0c0c0;
    padding-left: 8px;
  }

  /* site banner laid over the bottom right corner */
  .watermark {
    position: absolute;
    left: 1361px;
    top: 1314px;
    right: 0;
    bottom: 0;
    display: flex;
    align-items: center;
    background: #80aad8;
    white-space: nowrap;
  }

  .wm-title {
    margin-left: 14px;
    font-size: 56px;
    font-weight: 900;
    line-height: 1;
    color: #1a0a8c;
  }

  .wm-logo {
    margin-left: 24px;
    flex: none;
  }

  .wm-glyph {
    fill: #ecc94b;
    font-size: 44px;
    font-weight: 900;
    text-anchor: middle;
  }

  .wm-url {
    margin-left: 25px;
    font: 700 60px "Liberation Serif", serif;
    letter-spacing: 3px;
    color: #fff;
  }
</style>
